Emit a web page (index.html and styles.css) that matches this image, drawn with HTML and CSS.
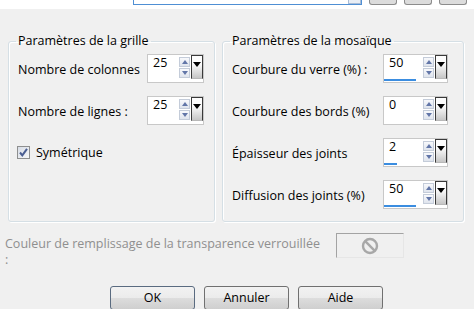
FILE: index.html
```html
<!DOCTYPE html>
<html lang="fr">
<head>
    <meta charset="UTF-8">
    <title>Mosaïque de verre</title>
    <link rel="stylesheet" href="styles.css">
</head>
<body>
    <div class="topbar">
        <div class="combo"><span class="combo-btn"></span></div>
        <span class="top-btn"></span>
        <span class="top-btn"></span>
        <span class="top-btn"></span>
    </div>

    <div class="groups">
        <fieldset class="group group-grid">
            <legend>Paramètres de la grille</legend>
            <div class="rows">
                <div class="row">
                    <span class="label">Nombre de colonnes</span>
                    <div class="spin spin-narrow">
                        <div class="spin-top">
                            <span class="spin-val">25</span>
                            <span class="spin-arrows"><span class="arr up"></span><span class="arr down"></span></span>
                            <span class="spin-drop"></span>
                        </div>
                    </div>
                </div>
                <div class="row">
                    <span class="label">Nombre de lignes :</span>
                    <div class="spin spin-narrow">
                        <div class="spin-top">
                            <span class="spin-val">25</span>
                            <span class="spin-arrows"><span class="arr up"></span><span class="arr down"></span></span>
                            <span class="spin-drop"></span>
                        </div>
                    </div>
                </div>
                <div class="row">
                    <label class="check">
                        <span class="check-box">
                            <svg width="11" height="11" viewBox="0 0 11 11"><path d="M2 5.5 L4.3 8.3 L9 1.8" fill="none" stroke="#4a5e92" stroke-width="2"/></svg>
                        </span>
                        <span class="label">Symétrique</span>
                    </label>
                </div>
            </div>
        </fieldset>

        <fieldset class="group group-mosaic">
            <legend>Paramètres de la mosaïque</legend>
            <div class="rows">
                <div class="row">
                    <span class="label">Courbure du verre (%) :</span>
                    <div class="spin spin-wide">
                        <div class="spin-top">
                            <span class="spin-val">50</span>
                            <span class="spin-arrows"><span class="arr up"></span><span class="arr down"></span></span>
                            <span class="spin-drop"></span>
                        </div>
                        <div class="spin-bar" style="width:32px"></div>
                    </div>
                </div>
                <div class="row">
                    <span class="label">Courbure des bords (%)</span>
                    <div class="spin spin-wide">
                        <div class="spin-top">
                            <span class="spin-val">0</span>
                            <span class="spin-arrows"><span class="arr up"></span><span class="arr down"></span></span>
                            <span class="spin-drop"></span>
                        </div>
                        <div class="spin-bar" style="width:0px"></div>
                    </div>
                </div>
                <div class="row">
                    <span class="label">Épaisseur des joints</span>
                    <div class="spin spin-wide">
                        <div class="spin-top">
                            <span class="spin-val">2</span>
                            <span class="spin-arrows"><span class="arr up"></span><span class="arr down"></span></span>
                            <span class="spin-drop"></span>
                        </div>
                        <div class="spin-bar" style="width:13px"></div>
                    </div>
                </div>
                <div class="row">
                    <span class="label">Diffusion des joints (%)</span>
                    <div class="spin spin-wide">
                        <div class="spin-top">
                            <span class="spin-val">50</span>
                            <span class="spin-arrows"><span class="arr up"></span><span class="arr down"></span></span>
                            <span class="spin-drop"></span>
                        </div>
                        <div class="spin-bar" style="width:32px"></div>
                    </div>
                </div>
            </div>
        </fieldset>
    </div>

    <div class="fill">
        <div class="fill-label">Couleur de remplissage de la transparence verrouillée<br>:</div>
        <div class="swatch">
            <svg width="18" height="18" viewBox="0 0 18 18">
                <circle cx="9" cy="9" r="7" fill="none" stroke="#a8a8a8" stroke-width="2.4"/>
                <path d="M4.2 4.2 L13.8 13.8" stroke="#a8a8a8" stroke-width="2.4"/>
            </svg>
        </div>
    </div>

    <div class="buttons">
        <button class="btn btn-default">OK</button>
        <button class="btn">Annuler</button>
        <button class="btn">Aide</button>
    </div>
</body>
</html>
```

FILE: styles.css
```css
body {
    margin: 0;
    width: 474px;
    height: 309px;
    overflow: hidden;
    background-color: #f0f0f0;
    font-family: "Open Sans", sans-serif;
    font-size: 12.5px;
    line-height: 16px;
    color: #000;
}
.topbar {
    height: 9px;
    background: #fff;
    display: flex;
    align-items: flex-start;
    gap: 7px;
    padding-left: 133px;
}
.combo {
    box-sizing: border-box;
    width: 229px;
    height: 5px;
    border: 1px solid #4f8fd4;
    border-top: none;
    display: flex;
    justify-content: flex-end;
}
.combo-btn {
    box-sizing: border-box;
    width: 13px;
    height: 4px;
    border: 1px solid #a9bcd6;
    border-top: none;
    background: #e9eef5;
}
.top-btn {
    box-sizing: border-box;
    width: 28px;
    height: 5px;
    border: 1px solid #8c8c8c;
    border-top: none;
    border-radius: 0 0 3px 3px;
    background: #dcdcdc;
}
.groups {
    display: flex;
    gap: 7px;
    margin: 24px 0 0 8px;
}
.group {
    box-sizing: border-box;
    margin: 0;
    padding: 5px 10px 12px 9px;
    border: 1px solid #d5dfe5;
    border-radius: 3px;
    box-shadow: inset 1px 1px 0 #fff, 1px 1px 0 #fff;
    min-width: 0;
}
.group legend {
    padding: 0 2px;
    margin-left: -2px;
}
.group-grid {
    width: 207px;
}
.group-mosaic {
    width: 242px;
    padding-right: 15px;
}
.rows {
    display: flex;
    flex-direction: column;
    gap: 13px;
}
.row {
    display: flex;
    align-items: center;
    justify-content: space-between;
    height: 29px;
}
.label {
    padding-top: 3px;
}
.spin {
    box-sizing: border-box;
    height: 29px;
    border: 1px solid #c8c8c8;
    background: #fff;
    display: flex;
    flex-direction: column;
    justify-content: space-between;
}
.spin-narrow {
    width: 57px;
}
.spin-wide {
    width: 65px;
}
.spin-top {
    display: flex;
    align-items: flex-start;
}
.spin-val {
    flex: 1;
    padding-left: 5px;
}
.spin-arrows {
    display: flex;
    flex-direction: column;
    gap: 1px;
    width: 11px;
    margin-top: 2px;
}
.arr {
    box-sizing: border-box;
    height: 10px;
    border: 1px solid #c4ccd9;
    background: linear-gradient(#f8f9fc, #dfe4ed);
    display: flex;
    align-items: center;
    justify-content: center;
}
.arr::after {
    content: "";
    border-left: 3px solid transparent;
    border-right: 3px solid transparent;
}
.up::after {
    border-bottom: 4px solid #6276a8;
}
.down::after {
    border-top: 4px solid #6276a8;
}
.spin-drop {
    box-sizing: border-box;
    width: 12px;
    height: 24px;
    margin-left: 1px;
    padding-top: 6px;
    border: 1px solid #3a3a3a;
    border-bottom-color: #b8b8b8;
    background: linear-gradient(#fdfdfd 35%, #c6c6c6);
    display: flex;
    justify-content: center;
}
.spin-drop::after {
    content: "";
    height: 0;
    border-left: 4px solid transparent;
    border-right: 4px solid transparent;
    border-top: 5px solid #000;
}
.spin-bar {
    height: 3px;
    margin-bottom: 1px;
    background: #3b8de0;
}
.check {
    display: flex;
    align-items: center;
    gap: 6px;
    margin-left: -1px;
}
.check .label {
    padding-top: 0;
}
.check-box {
    box-sizing: border-box;
    width: 13px;
    height: 13px;
    border: 1px solid #8e8f8f;
    background: linear-gradient(135deg, #d8dde6, #f6f7f9);
    display: flex;
    align-items: center;
    justify-content: center;
}
.fill {
    display: flex;
    align-items: flex-start;
    margin-top: 11px;
    padding-left: 5px;
}
.fill-label {
    box-sizing: border-box;
    width: 331px;
    padding-top: 3px;
    color: #8f8f8f;
}
.swatch {
    box-sizing: border-box;
    width: 68px;
    height: 25px;
    border: 1px solid;
    border-color: #a3a3a3 #e6e6e6 #e6e6e6 #a3a3a3;
    display: flex;
    align-items: center;
    justify-content: center;
}
.buttons {
    display: flex;
    gap: 9px;
    margin-top: 18px;
    padding-left: 110px;
}
.btn {
    box-sizing: border-box;
    width: 85px;
    height: 24px;
    padding: 0;
    border: 1px solid #707070;
    border-radius: 3px;
    background: linear-gradient(#f2f2f2 0, #ebebeb 50%, #dddddd 50%, #cfcfcf 100%);
    font: inherit;
    color: #000;
}
.btn-default {
    border-color: #5a6b80;
}
```
